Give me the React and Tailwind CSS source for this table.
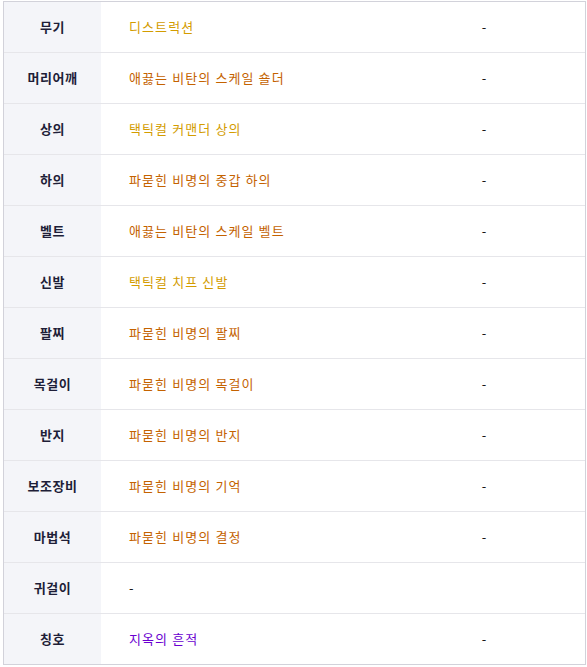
const rows = [
    { slot: '무기', name: '디스트럭션', color: 'text-[#d39c00]', extra: '-' },
    { slot: '머리어깨', name: '애끓는 비탄의 스케일 숄더', color: 'text-[#c46200]', extra: '-' },
    { slot: '상의', name: '택틱컬 커맨더 상의', color: 'text-[#d39c00]', extra: '-' },
    { slot: '하의', name: '파묻힌 비명의 중갑 하의', color: 'text-[#c46200]', extra: '-' },
    { slot: '벨트', name: '애끓는 비탄의 스케일 벨트', color: 'text-[#c46200]', extra: '-' },
    { slot: '신발', name: '택틱컬 치프 신발', color: 'text-[#d39c00]', extra: '-' },
    { slot: '팔찌', name: '파묻힌 비명의 팔찌', color: 'text-[#c46200]', extra: '-' },
    { slot: '목걸이', name: '파묻힌 비명의 목걸이', color: 'text-[#c46200]', extra: '-' },
    { slot: '반지', name: '파묻힌 비명의 반지', color: 'text-[#c46200]', extra: '-' },
    { slot: '보조장비', name: '파묻힌 비명의 기억', color: 'text-[#c46200]', extra: '-' },
    { slot: '마법석', name: '파묻힌 비명의 결정', color: 'text-[#c46200]', extra: '-' },
    { slot: '귀걸이', name: '-', color: 'text-[#111111]', extra: '' },
    { slot: '칭호', name: '지옥의 흔적', color: 'text-[#6a00d0]', extra: '-' },
]

export default function App() {
    return (
        <div className="bg-white min-h-[667px] pt-[1px] pl-[3px]">
            <div
                className="w-[583px] border border-[#d2d2da] text-[13px] leading-none"
                style={{ fontFamily: '"Noto Sans CJK KR", "Noto Sans", sans-serif' }}>
                {rows.map((row, i) => (
                    <div
                        key={i}
                        className={
                            i === rows.length - 1
                                ? 'grid grid-cols-[97px_280px_1fr] h-[50px]'
                                : 'grid grid-cols-[97px_280px_1fr] h-[51px] border-b border-[#e6e6ea]'
                        }>
                        <div className="bg-[#f4f5f9] flex items-center justify-center pb-[1px] font-bold tracking-[0.5px] text-[#1e1e38]">
                            {row.slot}
                        </div>
                        <div className={`flex items-center pl-[28px] pb-[1px] tracking-[1.1px] ${row.color}`}>
                            {row.name}
                        </div>
                        <div className="flex items-center justify-center pl-[2px] pb-[1px] text-[#111111]">
                            {row.extra}
                        </div>
                    </div>
                ))}
            </div>
        </div>
    )
}
